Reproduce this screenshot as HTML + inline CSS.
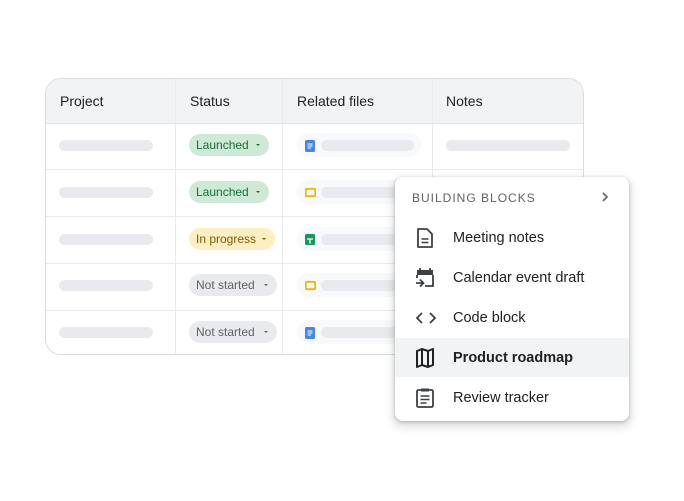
<!DOCTYPE html>
<html><head><style>
body{margin:0;width:684px;height:501px;background:#fff;font-family:"Liberation Sans",sans-serif;position:relative;overflow:hidden}
.a{position:absolute}
.tbl{left:45px;top:78px;width:537px;height:275px;border:1px solid #dadce0;border-radius:16px;overflow:hidden;background:#fff}
.hd{left:0;top:0;width:100%;height:44px;background:#f1f3f4;border-bottom:1px solid #e3e3e3}
.h{top:14px;font-size:14px;color:#202124}
.vl{top:0;width:1px;height:100%;background:#e8eaed}
.hl{left:0;width:100%;height:1px;background:#e8eaed}
.bar{height:11px;border-radius:6px;background:#e8eaed}
.pill{height:22px;border-radius:11px;font-size:12px;line-height:22px;padding-left:7px;box-sizing:border-box}
.pill:after{content:"";position:absolute;right:9px;top:10px;border:2.5px solid transparent;border-top:2.5px solid currentColor;border-bottom:0}
.chip{width:124px;height:24px;border-radius:12px;background:#f8f9fa}
.menu{left:395px;top:177px;width:234px;height:244px;background:#fff;border-radius:8px;box-shadow:0 1px 3px rgba(60,64,67,.3),0 4px 8px 3px rgba(60,64,67,.15);overflow:hidden}
.it{left:58px;font-size:14.5px;color:#202124}
.ic{left:20px}
</style></head><body>
<div class="a tbl">
<div class="a hd"></div>
<div class="a h" style="left:14px">Project</div>
<div class="a h" style="left:144px">Status</div>
<div class="a h" style="left:251px">Related files</div>
<div class="a h" style="left:400px">Notes</div>
<div class="a vl" style="left:129px"></div>
<div class="a vl" style="left:236px"></div>
<div class="a vl" style="left:386px"></div>
<div class="a hl" style="top:90px"></div>
<div class="a hl" style="top:137px"></div>
<div class="a hl" style="top:184px"></div>
<div class="a hl" style="top:231px"></div>
</div>
<div class="a bar" style="left:59px;top:140px;width:94px"></div>
<div class="a bar" style="left:59px;top:187px;width:94px"></div>
<div class="a bar" style="left:59px;top:234px;width:94px"></div>
<div class="a bar" style="left:59px;top:280px;width:94px"></div>
<div class="a bar" style="left:59px;top:327px;width:94px"></div>
<div class="a pill" style="left:189px;top:134px;width:80px;background:#ceead6;color:#137333">Launched</div>
<div class="a pill" style="left:189px;top:181px;width:80px;background:#ceead6;color:#137333">Launched</div>
<div class="a pill" style="left:189px;top:228px;width:86px;background:#feefc3;color:#7c5a00">In progress</div>
<div class="a pill" style="left:189px;top:274px;width:88px;background:#e8eaed;color:#5f6368">Not started</div>
<div class="a pill" style="left:189px;top:321px;width:88px;background:#e8eaed;color:#5f6368">Not started</div>
<div class="a chip" style="left:297px;top:133px"></div>
<div class="a chip" style="left:297px;top:180px"></div>
<div class="a chip" style="left:297px;top:227px"></div>
<div class="a chip" style="left:297px;top:273px"></div>
<div class="a chip" style="left:297px;top:320px"></div>
<div class="a bar" style="left:321px;top:140px;width:93px"></div>
<div class="a bar" style="left:321px;top:187px;width:93px"></div>
<div class="a bar" style="left:321px;top:234px;width:93px"></div>
<div class="a bar" style="left:321px;top:280px;width:93px"></div>
<div class="a bar" style="left:321px;top:327px;width:93px"></div>
<svg class="a" style="left:305px;top:140px" width="11" height="12"><rect width="10" height="12" rx="1.5" fill="#4285f4"/><path d="M2.5 4h5M2.5 6h5M2.5 8h3.5" stroke="#fff" stroke-width="1"/></svg>
<svg class="a" style="left:305px;top:187px" width="11" height="11"><rect x="0.8" y="1.8" width="9.4" height="7.4" rx="1" fill="none" stroke="#f4b400" stroke-width="1.8"/></svg>
<svg class="a" style="left:305px;top:234px" width="11" height="12"><rect width="10" height="11" rx="1.5" fill="#0f9d58"/><path d="M2 5h6M5 5v4.5" stroke="#fff" stroke-width="1.3"/></svg>
<svg class="a" style="left:305px;top:280px" width="11" height="11"><rect x="0.8" y="1.8" width="9.4" height="7.4" rx="1" fill="none" stroke="#f4b400" stroke-width="1.8"/></svg>
<svg class="a" style="left:305px;top:327px" width="11" height="12"><rect width="10" height="12" rx="1.5" fill="#4285f4"/><path d="M2.5 4h5M2.5 6h5M2.5 8h3.5" stroke="#fff" stroke-width="1"/></svg>
<div class="a bar" style="left:446px;top:140px;width:124px"></div>
<div class="a menu">
<div class="a" style="left:17px;top:14px;font-size:12px;letter-spacing:1px;color:#5f6368">BUILDING BLOCKS</div>
<svg class="a" style="left:205px;top:14px" width="10" height="12"><path d="M3 2l4 4-4 4" fill="none" stroke="#5f6368" stroke-width="1.6"/></svg>
<div class="a" style="left:0;top:161px;width:234px;height:39px;background:#f1f3f4"></div>
<svg class="a ic" style="top:50px" width="20" height="22"><path d="M3 2h9l5 5v13H3z" fill="none" stroke="#3c4043" stroke-width="1.8" stroke-linejoin="round"/><path d="M6.5 12h7M6.5 15.5h7" stroke="#3c4043" stroke-width="1.6"/></svg>
<div class="a it" style="top:53px">Meeting notes</div>
<svg class="a ic" style="top:90px" width="22" height="22"><path d="M5 1v3M15 1v3" stroke="#3c4043" stroke-width="1.8"/><rect x="2" y="3" width="16" height="5" fill="#3c4043"/><path d="M2 8v3M18 8v11h-8" fill="none" stroke="#3c4043" stroke-width="1.8"/><path d="M1 16h7M5 12.5l3.5 3.5-3.5 3.5" fill="none" stroke="#3c4043" stroke-width="1.8"/></svg>
<div class="a it" style="top:93px">Calendar event draft</div>
<svg class="a ic" style="top:132px" width="22" height="18"><path d="M7 4l-5 5 5 5M15 4l5 5-5 5" fill="none" stroke="#3c4043" stroke-width="1.8"/></svg>
<div class="a it" style="top:133px">Code block</div>
<svg class="a ic" style="top:170px" width="22" height="22"><path d="M2 4l5-2 6 2 5-2v16l-5 2-6-2-5 2z M7 2v16M13 4v16" fill="none" stroke="#202124" stroke-width="2" stroke-linejoin="round"/></svg>
<div class="a it" style="top:173px;font-weight:bold;color:#202124">Product roadmap</div>
<svg class="a ic" style="top:210px" width="20" height="22"><rect x="2" y="3" width="16" height="17" rx="1.5" fill="none" stroke="#3c4043" stroke-width="1.8"/><rect x="6" y="1.5" width="8" height="3" fill="#3c4043"/><path d="M5.5 9h9M5.5 12.5h9M5.5 16h6" stroke="#3c4043" stroke-width="1.6"/></svg>
<div class="a it" style="top:213px">Review tracker</div>
</div>
</body></html>
